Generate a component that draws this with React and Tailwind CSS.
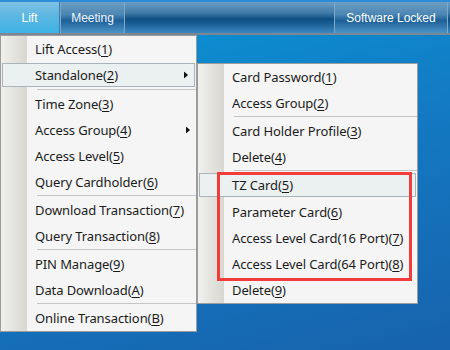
import React from "react";

const mainMenu = [
  { label: "Lift Access", key: "1" },
  { label: "Standalone", key: "2", sub: true, active: true },
  "sep",
  { label: "Time Zone", key: "3" },
  { label: "Access Group", key: "4", sub: true },
  { label: "Access Level", key: "5" },
  { label: "Query Cardholder", key: "6" },
  "sep",
  { label: "Download Transaction", key: "7" },
  { label: "Query Transaction", key: "8" },
  "sep",
  { label: "PIN Manage", key: "9" },
  { label: "Data Download", key: "A" },
  "sep",
  { label: "Online Transaction", key: "B" },
];

const standaloneMenu = [
  { label: "Card Password", key: "1" },
  { label: "Access Group", key: "2" },
  "sep",
  { label: "Card Holder Profile", key: "3" },
  { label: "Delete", key: "4" },
  "sep",
  { label: "TZ Card", key: "5", active: true },
  { label: "Parameter Card", key: "6" },
  { label: "Access Level Card(16 Port)", key: "7" },
  { label: "Access Level Card(64 Port)", key: "8" },
  { label: "Delete", key: "9" },
];

function Arrow() {
  return (
    <svg width="4" height="7" viewBox="0 0 4 7" className="absolute right-[6px] top-1/2 -translate-y-1/2">
      <polygon points="0,0 4,3.5 0,7" fill="#111" />
    </svg>
  );
}

function MenuItem({ item }) {
  if (item === "sep") {
    return <div className="ml-[36px] h-[2px] border-t border-[#c5c5c5]" />;
  }
  return (
    <div className="relative h-[26px]">
      <div
        className={`relative flex h-full items-center pt-[1px] text-[13px] tracking-[-0.1px] text-[#1b1b1b] ${
          item.active ? "mx-[1px] my-[1px] !h-[24px] border border-[#aab3b9] bg-[#ebf0f1] pl-[32px]" : "pl-[34px]"
        }`}
      >
        <span className="whitespace-nowrap">
          {item.label}(<span className="underline underline-offset-[2px]">{item.key}</span>)
        </span>
        {item.sub ? <Arrow /> : null}
      </div>
    </div>
  );
}

function Menu({ items, className }) {
  return (
    <div
      className={`absolute border border-[#9c9c9c] bg-[linear-gradient(90deg,#f0f0ed_0px,#d8d7d1_26px,#f5f5f5_26px)] ${className}`}
    >
      {items.map((item, index) => (
        <MenuItem key={index} item={item} />
      ))}
    </div>
  );
}

export default function App() {
  return (
    <div
      className="relative flex h-[350px] w-[450px] flex-col overflow-hidden"
      style={{ fontFamily: '"Noto Sans", "Open Sans", sans-serif' }}
    >
      <div className="h-[2px] bg-[#2d8cd8]" />
      <div
        className="flex h-[31px] bg-[linear-gradient(180deg,#6c9ec4_0%,#3f7aa8_35%,#0f4f82_55%,#1a5e94_70%,#3c87bf_100%)] text-[12px] text-white"
        style={{ fontFamily: '"Liberation Sans", Arial, sans-serif' }}
      >
        <div className="flex w-[60px] items-center justify-center border-r border-[#3b7fae] bg-[linear-gradient(180deg,#80c2e4_0%,#5cb6e2_45%,#3db3e6_100%)]">
          Lift
        </div>
        <div className="flex w-[65px] items-center justify-center border-x border-[#7fa9c9] bg-[linear-gradient(180deg,#6e9ec2_0%,#4b86b4_40%,#1d6097_60%,#4c94c8_100%)] text-[#f0f6fb]">
          Meeting
        </div>
        <div className="flex-1" />
        <div className="mr-[2px] flex w-[114px] items-center justify-center border-x border-[#7fa9c9] bg-[linear-gradient(180deg,#6e9ec2_0%,#4b86b4_40%,#1d6097_60%,#4c94c8_100%)]">
          Software Locked
        </div>
      </div>
      <div className="h-[2px] bg-[#7b8791]" />
      <div className="flex-1 bg-[linear-gradient(165deg,#0a93d5_0%,#1379c2_45%,#1762ac_100%)]" />

      <Menu items={mainMenu} className="left-0 top-[35px] w-[197px]" />
      <Menu items={standaloneMenu} className="left-[197px] top-[63px] w-[221px]" />

      <div className="absolute left-[217px] top-[172px] h-[109px] w-[195px] border-[3px] border-[#f23b3b]" />
    </div>
  );
}
